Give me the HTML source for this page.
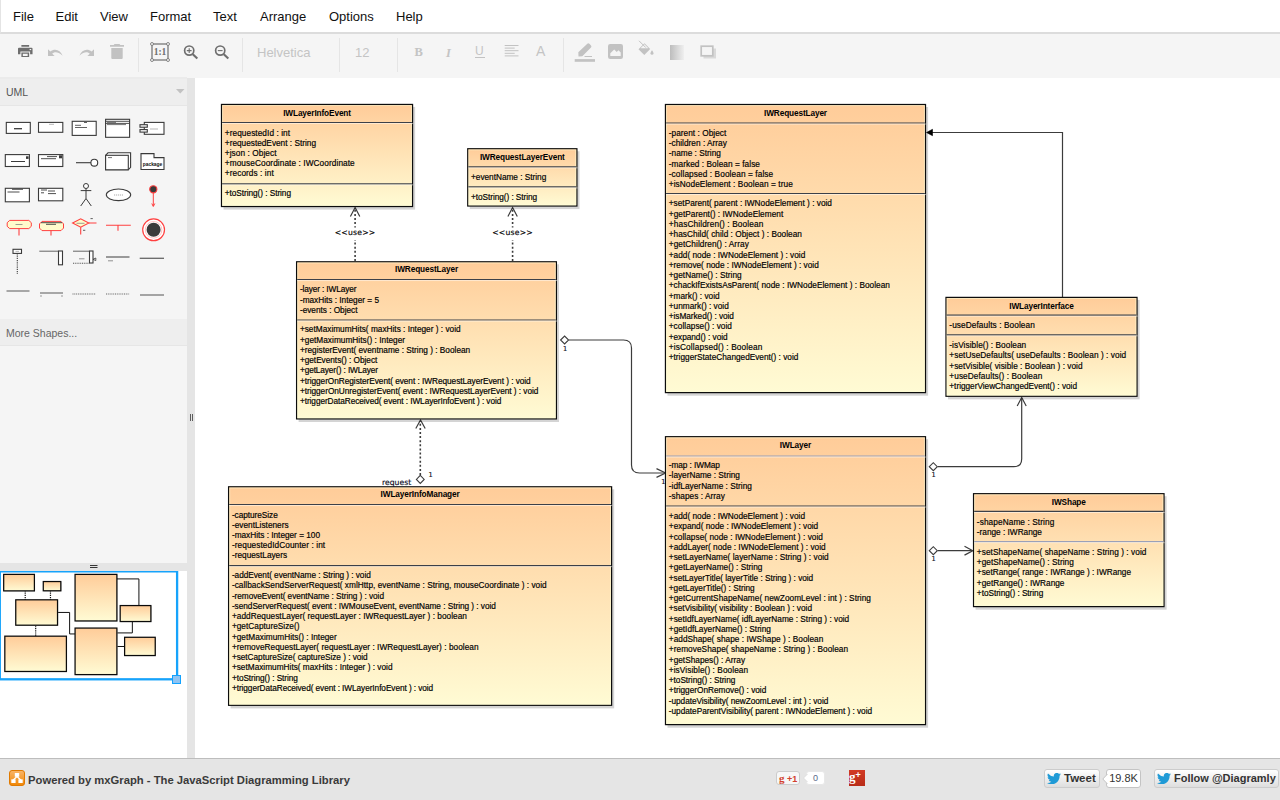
<!DOCTYPE html>
<html><head><meta charset="utf-8"><title>Diagramly</title>
<style>

html,body{margin:0;padding:0}
body{width:1280px;height:800px;overflow:hidden;position:relative;background:#fff;font-family:"Liberation Sans",sans-serif;color:#000}
#menubar{position:absolute;left:0;top:0;width:1279px;height:32px;background:#fff;border-left:1px solid #e4e4e4;border-bottom:2px solid #dcdcdc}
#menubar a{position:absolute;top:9px;font-size:13px;line-height:16px;color:#111;white-space:nowrap}
#toolbar{position:absolute;left:0;top:34px;width:1280px;height:44px;background:#f5f5f5}
#toolbar .sep{position:absolute;top:3px;width:1px;height:34px;background:#e5e5e5}
#toolbar svg{position:absolute;overflow:visible}
#toolbar .tx{position:absolute;color:#c4c4c4;white-space:nowrap}
#sidebar{position:absolute;left:0;top:77px;width:187px;height:486px;background:#f5f5f5;border-top:2px solid #ebebeb;box-sizing:border-box}
#sidebar .hd{position:absolute;left:0;width:187px;height:27px;background:#eeeeee;border-bottom:1px solid #e6e6e6;box-sizing:border-box;font-size:10.5px;color:#555;line-height:26px;padding-left:6px}
#sidebar svg.it{position:absolute;overflow:visible}
#hsplit{position:absolute;left:0;top:563px;width:187px;height:8px;background:#e5e5e5}
#outbg{position:absolute;left:0;top:571px;width:187px;height:187px;background:#fff}
#vsplit{position:absolute;left:187px;top:78px;width:8px;height:680px;background:#e5e5e5}
#footer{position:absolute;left:0;top:758px;width:1280px;height:42px;background:#e5e5e5;border-top:1px solid #bdbdbd;box-sizing:border-box}
#footer .pw{position:absolute;left:28px;top:13.500px;font-weight:bold;font-size:11.250px;line-height:14px;color:#3a3a3a;white-space:nowrap}
#footer .btn{position:absolute;box-sizing:border-box;border:1px solid #ccc;border-radius:3px;background:linear-gradient(#fff,#dedede);font-weight:bold;font-size:11px;color:#333;white-space:nowrap}
#footer .cnt{position:absolute;box-sizing:border-box;border:1px solid #c4c4c4;border-radius:3px;background:#fff;font-size:11px;color:#333;text-align:center}
#diagram text{font-family:"Liberation Sans",sans-serif;fill:#000}
#diagram .ct{font-weight:bold;font-size:8.25px;letter-spacing:-.12px}
#diagram .cl{font-size:8.25px;stroke:#000;stroke-width:.18px}
#diagram .use{font-family:'DejaVu Sans','Liberation Sans',sans-serif;font-size:7.700px;letter-spacing:.2px;stroke:#000;stroke-width:.15px}
#diagram .el{font-family:'DejaVu Sans','Liberation Sans',sans-serif;font-size:7.700px;fill:#0a0a20;stroke:#0a0a20;stroke-width:.15px}
#diagram .e1{font-family:'DejaVu Sans','Liberation Sans',sans-serif;font-size:6.600px;fill:#0a0a20;stroke:#0a0a20;stroke-width:.15px}

</style></head>
<body>
<div id="menubar">
<a style="left:12px">File</a><a style="left:54.5px">Edit</a><a style="left:99px">View</a><a style="left:149px">Format</a><a style="left:212px">Text</a><a style="left:259px">Arrange</a><a style="left:328px">Options</a><a style="left:395px">Help</a>
</div>
<div id="toolbar"><div style="position:absolute;left:0;top:1px">
<svg style="left:18px;top:10px" width="15.500" height="13" viewBox="0 0 16 14" preserveAspectRatio="none"><path fill="#6e6e6e" d="M3.5 0h8v2h-8zM1 3h13a1 1 0 0 1 1 1v6h-2.5v-3h-10v3H0V4a1 1 0 0 1 1-1zM3.5 8h8v5h-8zM5 9.3v2.6h5V9.3z"/><rect x="12" y="4.3" width="1.6" height="1.2" fill="#f5f5f5"/></svg>
<svg style="left:48px;top:13px" width="16" height="9" viewBox="0 0 16 9"><path fill="#c2c2c2" d="M0 1.2L0 8h6.6L4.3 5.7C6 4 9.5 3 14.6 7.8 12.4 1.6 6.5.2 2.3 3.6z"/></svg>
<svg style="left:78px;top:13px" width="16" height="9" viewBox="0 0 16 9"><path fill="#c2c2c2" d="M16 1.2L16 8H9.4l2.3-2.3C10 4 6.500 3 1.400 7.8 3.600 1.600 9.500.2 13.700 3.600z"/></svg>
<svg style="left:110px;top:9px" width="14" height="15" viewBox="0 0 14 15"><path fill="#c2c2c2" d="M4.500 0h5l.8 1H14v1.700H0V1h3.700zM1.300 4h11.400v10a1 1 0 0 1-1 1H2.300a1 1 0 0 1-1-1z"/></svg>
<div class="sep" style="left:138px"></div>
<svg style="left:150px;top:6.5px" width="20" height="20" viewBox="0 0 20 20"><rect x="2" y="2" width="16" height="16" fill="none" stroke="#6e6e6e" stroke-width="1.200"/><g fill="#f5f5f5" stroke="#6e6e6e" stroke-width=".800"><circle cx="2" cy="2" r="1.500"/><circle cx="18" cy="2" r="1.500"/><circle cx="2" cy="18" r="1.500"/><circle cx="18" cy="18" r="1.500"/></g><text x="10" y="13.300" text-anchor="middle" font-family="Liberation Serif,serif" font-weight="bold" font-size="9.500" fill="#6e6e6e">1:1</text></svg>
<svg style="left:183px;top:9px" width="16" height="16" viewBox="0 0 16 16"><circle cx="6.200" cy="6.600" r="4.600" fill="none" stroke="#6e6e6e" stroke-width="1.700"/><path d="M9.800 10.200L14.300 14.500" stroke="#6e6e6e" stroke-width="2.100" fill="none"/><path d="M3.800 6.600h4.800M6.200 4.200v4.800" stroke="#6e6e6e" stroke-width="1.100" fill="none"/></svg>
<svg style="left:213.600px;top:9px" width="16" height="16" viewBox="0 0 16 16"><circle cx="6.200" cy="6.600" r="4.600" fill="none" stroke="#6e6e6e" stroke-width="1.700"/><path d="M9.800 10.200L14.300 14.500" stroke="#6e6e6e" stroke-width="2.100" fill="none"/><path d="M3.800 6.600h4.800" stroke="#6e6e6e" stroke-width="1.100" fill="none"/></svg>
<div class="sep" style="left:242px"></div>
<div class="tx" style="left:257px;top:10px;font-size:13px;line-height:16px">Helvetica</div>
<div class="sep" style="left:339px"></div>
<div class="tx" style="left:355px;top:10px;font-size:13px;line-height:16px">12</div>
<div class="sep" style="left:397px"></div>
<div class="tx" style="left:414.500px;top:9px;font:bold 12.500px/16px 'Liberation Serif',serif">B</div>
<div class="tx" style="left:446px;top:9.500px;font:italic bold 12.500px/16px 'Liberation Serif',serif">I</div>
<div class="tx" style="left:475px;top:8px;font:12px/16px 'Liberation Sans',sans-serif">U</div>
<div style="position:absolute;left:475px;top:22px;width:10px;height:1px;background:#c2c2c2"></div>
<svg style="left:503.500px;top:10px" width="16" height="14" viewBox="0 0 16 14"><path d="M.7 .5h13.800M.7 3.100h10M.7 5.700h13.800M.7 8.300h10M.7 10.900h13.800" stroke="#c2c2c2" stroke-width="1" fill="none"/></svg>
<div class="tx" style="left:536px;top:7px;font:14px/18px 'Liberation Sans',sans-serif">A</div>
<div class="sep" style="left:563px"></div>
<svg style="left:574px;top:8px" width="22" height="20" viewBox="0 0 22 20"><rect x=".7" y="16.100" width="20.300" height="2.700" fill="#c2c2c2"/><path d="M4.500 13.500L4.300 9.300 13.300 .8a1.500 1.500 0 0 1 2.100 0l1.600 1.700a1.500 1.500 0 0 1 0 2L8.300 13.300z" fill="#c2c2c2"/><path d="M10.500 13.500H18" stroke="#c2c2c2" stroke-width="1" fill="none"/></svg>
<svg style="left:608px;top:9px" width="15" height="15" viewBox="0 0 15 15"><rect x="0" y="0" width="15" height="15" rx="2.200" fill="#c2c2c2"/><path d="M2.300 12V9.300L6.200 5.500 8.700 8 10.500 6.300 12.700 8.500V12z" fill="#f5f5f5"/></svg>
<svg style="left:637px;top:5px" width="18" height="18" viewBox="0 0 18 18"><path d="M1.500 9.300L7.500 3.200 13.200 9 7.300 15z" fill="#c2c2c2"/><path d="M3.500 8.300L7.500 4.300 11.300 8.300z" fill="#f5f5f5"/><path d="M2 .8L8.800 7.600" stroke="#c2c2c2" stroke-width="1" fill="none"/><path d="M15 10.300c1.200 1.700 1.500 2.300 1.500 3a1.500 1.500 0 0 1-3 0c0-.7.300-1.300 1.500-3z" fill="#c2c2c2"/></svg>
<svg style="left:670px;top:10px" width="14" height="15" viewBox="0 0 14 15"><defs><linearGradient id="tg" x1="0" y1="0" x2="1" y2="0"><stop offset="0" stop-color="#bdbdbd"/><stop offset="1" stop-color="#efefef"/></linearGradient></defs><rect width="14" height="15" fill="url(#tg)"/></svg>
<svg style="left:700px;top:10px" width="17" height="15" viewBox="0 0 17 15"><rect x="3.500" y="3.500" width="12.500" height="10" fill="#d9d9d9"/><rect x="1.200" y="1.200" width="11.600" height="9.600" fill="#f5f5f5" stroke="#c2c2c2" stroke-width="1.700"/></svg>
</div></div>
<div id="sidebar">
<div class="hd" style="top:0">UML</div>
<svg class="it" style="left:176px;top:10px" width="9" height="5" viewBox="0 0 9 5"><path d="M0 0H8.500L4.250 4.500z" fill="#c2c2c2"/></svg>
<svg class="it" style="left:0;top:-2px" width="187" height="240" viewBox="0 77 187 240" fill="none" stroke-width="1.100">
<rect x="6.3" y="122.4" width="24.0" height="11.0" fill="#fff" stroke="#3a3a3a" stroke-width="1.1" rx="0"/>
<path d="M14 128.700h8" stroke="#3a3a3a" stroke-width="1.3" />
<rect x="38.5" y="122.4" width="24.3" height="9.9" fill="#fff" stroke="#3a3a3a" stroke-width="1.1" rx="0"/>
<path d="M49 124.300h5" stroke="#888" stroke-width="0.6" />
<rect x="72.2" y="121.3" width="24.0" height="14.1" fill="#fff" stroke="#3a3a3a" stroke-width="1.1" rx="0"/>
<path d="M75 125.300h6M75 127.500h12M84 122.500h3" stroke="#3a3a3a" stroke-width="0.8" />
<rect x="105.6" y="119.3" width="24.0" height="18.0" fill="#fff" stroke="#3a3a3a" stroke-width="1.1" rx="0"/>
<path d="M105.600 121.300h24M105.600 123.400h24" stroke="#3a3a3a" stroke-width="0.9" />
<path d="M107 122.400h9M107 124.600h19" stroke="#3a3a3a" stroke-width="0.7" />
<rect x="144.3" y="122.4" width="19.7" height="11.9" fill="#fff" stroke="#3a3a3a" stroke-width="1.1" rx="0"/>
<rect x="140" y="124.7" width="7.3" height="2.5" fill="#fff" stroke="#3a3a3a" stroke-width="1.1" rx="0"/>
<rect x="140" y="129.6" width="7.3" height="2.5" fill="#fff" stroke="#3a3a3a" stroke-width="1.1" rx="0"/>
<path d="M150 129h8" stroke="#888" stroke-width="0.6" />
<rect x="5.3" y="154.6" width="24.1" height="11.9" fill="#fff" stroke="#3a3a3a" stroke-width="1.1" rx="0"/>
<path d="M11 161.500h14" stroke="#3a3a3a" stroke-width="1" />
<rect x="26" y="156.300" width="2.600" height="2.600" fill="#3a3a3a"/>
<rect x="38.5" y="154.6" width="24.3" height="11.9" fill="#fff" stroke="#3a3a3a" stroke-width="1.1" rx="0"/>
<path d="M47 156.600h10M41 158.700h15" stroke="#3a3a3a" stroke-width="0.9" />
<rect x="59" y="155.300" width="3" height="3" fill="#3a3a3a"/>
<path d="M76 162.700h15" stroke="#3a3a3a" stroke-width="1.1" />
<circle cx="94.300" cy="162.700" r="3.400" fill="#fff" stroke="#3a3a3a" stroke-width="1.100"/>
<path d="M105.600 155.300L108 152.800H130.600V167.300L128.300 169.800H105.600z" fill="#fff" stroke="#3a3a3a" stroke-width="1.100"/>
<rect x="105.6" y="155.3" width="22.7" height="14.5" fill="#fff" stroke="#3a3a3a" stroke-width="1.1" rx="0"/>
<path d="M108 157.600h4" stroke="#3a3a3a" stroke-width="0.7" />
<path d="M141 153.600H154V157.600H164V169.500H141z" fill="#fff" stroke="#3a3a3a" stroke-width="1.100"/>
<text x="152.500" y="166.300" text-anchor="middle" font-family="Liberation Sans,sans-serif" font-weight="bold" font-size="4.900" fill="#111" stroke="none">package</text>
<rect x="5.3" y="188.3" width="24.1" height="13.5" fill="#fff" stroke="#3a3a3a" stroke-width="1.1" rx="0"/>
<path d="M12 189.300h11M7.500 192h12" stroke="#3a3a3a" stroke-width="0.9" />
<rect x="38.5" y="188.3" width="24.3" height="12.5" fill="#fff" stroke="#3a3a3a" stroke-width="1.1" rx="0"/>
<path d="M41 190h6M48 191h7M41 192.800h3M48 193.600h8" stroke="#3a3a3a" stroke-width="0.9" />
<circle cx="86" cy="186" r="2.500" fill="#fff" stroke="#3a3a3a" stroke-width="1"/>
<path d="M86 188.500V198.500M80.700 190.600H91.300M86 198.500L80.700 206M86 198.500L91.300 206" stroke="#3a3a3a" stroke-width="1" />
<ellipse cx="118.500" cy="194.800" rx="12.200" ry="5.800" fill="#fff" stroke="#3a3a3a" stroke-width="1.100"/>
<path d="M114 195h9" stroke="#888" stroke-width="0.7" stroke-dasharray="1.200 .8"/>
<circle cx="153.300" cy="189.300" r="3.600" fill="#3a3a3a" stroke="#ff4040" stroke-width="1.100"/>
<path d="M153.300 193V206M151.800 203.500L153.300 206.500L154.800 203.500" stroke="#ff4040" stroke-width="1" />
<path d="M9.700 220.400H28.800L31.300 222.700V226.300L28.800 228.600H9.700L7.200 226.300V222.700z" fill="#fffbcc" stroke="#ff4040" stroke-width="1"/>
<path d="M19 228.600V235.500" stroke="#ff4040" stroke-width="1.1" />
<path d="M15.500 224.500h7" stroke="#777" stroke-width="0.7" />
<path d="M42 221.400H61L63.500 223.900V228.100L61 230.600H42L39.500 228.100V223.900z" fill="#fffbcc" stroke="#ff4040" stroke-width="1"/>
<path d="M51 230.600V235.500" stroke="#ff4040" stroke-width="1.1" />
<path d="M41 222.700h21M46 224.300h10" stroke="#3a3a3a" stroke-width="0.9" />
<path d="M72.600 223L80.700 218.800 88.800 223 80.700 227.200z" fill="#fffbcc" stroke="#ff4040" stroke-width="1.100"/>
<path d="M88.800 223H96.500M80.700 227.200V234.500" stroke="#ff4040" stroke-width="1.1" />
<path d="M76.500 223.300h8" stroke="#777" stroke-width="0.7" />
<path d="M90.500 218.600h2.300M83 230.300h2.300" stroke="#3a3a3a" stroke-width="0.8" />
<path d="M106 225.300H130.800M118 225.300V230.800" stroke="#ff4040" stroke-width="1.1" />
<circle cx="153.600" cy="229.800" r="10.900" fill="#fff" stroke="#ff4040" stroke-width="1.200"/><circle cx="153.600" cy="229.800" r="8.300" fill="none" stroke="#ffb4b4" stroke-width=".800"/><circle cx="153.600" cy="229.800" r="7" fill="#3a3a3a" stroke="none"/>
<rect x="13" y="249.3" width="8.5" height="4.1" fill="#fff" stroke="#3a3a3a" stroke-width="1.1" rx="0"/>
<path d="M17.300 253.400V274" stroke="#3a3a3a" stroke-width="1.1" stroke-dasharray="1.200 1"/>
<path d="M15.500 251.400h3.500" stroke="#888" stroke-width="0.6" />
<path d="M39.300 251.200H58.500" stroke="#555" stroke-width="0.9" />
<rect x="58.5" y="251" width="4.0" height="13.8" fill="#fff" stroke="#3a3a3a" stroke-width="1.1" rx="0"/>
<path d="M73 251.200H89.500" stroke="#555" stroke-width="0.9" />
<rect x="89.5" y="251" width="3.5" height="12" fill="#fff" stroke="#3a3a3a" stroke-width="1.1" rx="0"/>
<path d="M73 263.300H89.500" stroke="#555" stroke-width="1.1" stroke-dasharray="1 .8"/>
<path d="M79 258.800h5.500" stroke="#777" stroke-width="0.8" />
<path d="M93 259.300l2.800-1.300v2.600z" stroke="#3a3a3a" stroke-width="0.8" />
<path d="M106 257H129.500" stroke="#666" stroke-width="1.3" />
<path d="M108 260.800h5" stroke="#777" stroke-width="0.8" />
<path d="M139.700 258.300H164" stroke="#666" stroke-width="1.3" />
<path d="M6.500 291H29.500" stroke="#666" stroke-width="1.1" />
<path d="M40 293H63" stroke="#666" stroke-width="1.1" />
<path d="M40 296h2M61 296h2" stroke="#777" stroke-width="0.7" />
<path d="M72.500 294H96" stroke="#666" stroke-width="1.1" stroke-dasharray="1 .8"/>
<path d="M106 294H129.500" stroke="#666" stroke-width="1.1" stroke-dasharray="1 .8"/>
<path d="M140 295H164" stroke="#777" stroke-width="1.3" />
</svg>
<div class="hd" style="top:240px;color:#666;line-height:28px">More Shapes...</div>
</div>
<div id="hsplit"><svg style="position:absolute;left:90px;top:1px" width="8" height="5" viewBox="0 0 8 5"><path d="M0 1.500h7.500M0 3.500h7.500" stroke="#222" stroke-width=".9"/></svg></div>
<div id="outbg"></div>
<svg style="position:absolute;left:189px;top:414px;z-index:3" width="5" height="8" viewBox="0 0 5 8"><path d="M1.500 0v7M3.500 0v7" stroke="#222" stroke-width=".700"/></svg>
<svg id="outline" width="187" height="187" viewBox="0 571 187 187" style="position:absolute;left:0;top:571px">
<g fill="none" stroke="#111" stroke-width="1">
<path d="M25.22 599.68V590.95" stroke-dasharray="1 .8" stroke-width="1.2"/>
<path d="M50.47 599.68V590.95" stroke-dasharray="1 .8" stroke-width="1.2"/>
<path d="M35.68 636.2V625.37" stroke-dasharray="1 .8" stroke-width="1.2"/>
<path d="M58.11 612.44H69.61V633.94H75.15"/>
<path d="M117.44 632.92H132.35V621.66"/>
<path d="M117.44 646.49H124.52"/>
<path d="M138.91 605.5V578.91H116.96"/>
</g>
<rect x="4.28" y="574.98" width="30.72" height="16.49" fill="#000" opacity=".25"/>
<rect x="3.68" y="574.38" width="30.72" height="16.49" fill="url(#g)" stroke="#0a0a0a" stroke-width="1.250"/>
<rect x="43.870000000000005" y="582.14" width="17.56" height="9.25" fill="#000" opacity=".25"/>
<rect x="43.27" y="581.54" width="17.56" height="9.25" fill="url(#g)" stroke="#0a0a0a" stroke-width="1.250"/>
<rect x="16.35" y="600.41" width="41.78" height="25.38" fill="#000" opacity=".25"/>
<rect x="15.75" y="599.81" width="41.78" height="25.38" fill="url(#g)" stroke="#0a0a0a" stroke-width="1.250"/>
<rect x="5.42" y="636.77" width="61.59" height="35.31" fill="#000" opacity=".25"/>
<rect x="4.82" y="636.17" width="61.59" height="35.31" fill="url(#g)" stroke="#0a0a0a" stroke-width="1.250"/>
<rect x="75.66" y="574.99" width="41.82" height="46.55" fill="#000" opacity=".25"/>
<rect x="75.06" y="574.39" width="41.82" height="46.55" fill="url(#g)" stroke="#0a0a0a" stroke-width="1.250"/>
<rect x="75.66999999999999" y="628.6700000000001" width="41.81" height="46.53" fill="#000" opacity=".25"/>
<rect x="75.07" y="628.07" width="41.81" height="46.53" fill="url(#g)" stroke="#0a0a0a" stroke-width="1.250"/>
<rect x="120.78" y="606.16" width="30.71" height="15.97" fill="#000" opacity=".25"/>
<rect x="120.18" y="605.56" width="30.71" height="15.97" fill="url(#g)" stroke="#0a0a0a" stroke-width="1.250"/>
<rect x="125.21" y="637.88" width="30.62" height="18.25" fill="#000" opacity=".25"/>
<rect x="124.61" y="637.28" width="30.62" height="18.25" fill="url(#g)" stroke="#0a0a0a" stroke-width="1.250"/>
<rect x="-.200" y="571.350" width="177.300" height="107.950" fill="none" stroke="#16a3fb" stroke-width="2.300"/>
<rect x="172.5" y="675.5" width="8" height="8" fill="#8fc4f3" stroke="#12a2ff" stroke-width="1"/>
</svg>
<div id="vsplit"></div>
<svg id="diagram" width="1085" height="681" viewBox="195 77 1085 681" style="position:absolute;left:195px;top:77px">
<defs><linearGradient id="g" x1="0" y1="0" x2="0" y2="1"><stop offset="0" stop-color="#ffcc99"/><stop offset="1" stop-color="#fffbd4"/></linearGradient></defs>
<g fill="none" stroke="#3c3c3c" stroke-width="1.2">
<path d="M355.1 261V208.500" stroke-dasharray="2 2.100" stroke-width="1.600"/>
<path d="M350.40000000000003 216.5L355.1 207.5L359.8 216.5"/>
<path d="M512.6 261V208.500" stroke-dasharray="2 2.100" stroke-width="1.600"/>
<path d="M507.90000000000003 216.5L512.6 207.5L517.3000000000001 216.5"/>
<path d="M420.300 475V421" stroke-dasharray="2 2.100" stroke-width="1.600"/>
<path d="M415.8 428.5L420.5 420L425.2 428.5"/>
<path d="M420.300 475.300L424.200 479.400L420.300 483.500L416.400 479.400Z" fill="#fff" stroke-width="1.100"/>
<path d="M569 340H623.5Q631.5 340 631.5 348V465Q631.5 473 639.5 473H665"/>
<path d="M560.600 340L564.600 336L568.600 340L564.600 344Z" fill="#fff" stroke-width="1.100"/>
<path d="M656.5 468.6L665.6 473L656.5 477.4"/>
<path d="M937.6 466.7H1013.7Q1021.7 466.7 1021.7 458.7V398"/>
<path d="M929.300 466.700L933.300 462.700L937.300 466.700L933.300 470.700Z" fill="#fff" stroke-width="1.100"/>
<path d="M1017.2 406L1021.7 397.5L1026.2 406"/>
<path d="M937.6 550.7H972"/>
<path d="M929.300 550.700L933.300 546.700L937.300 550.700L933.300 554.700Z" fill="#fff" stroke-width="1.100"/>
<path d="M964.5 546.3L972.8 550.7L964.5 555.1"/>
<path d="M1062.5 297V132.5H931"/>
<path d="M926.5 132.5L932.5 129.3V135.7Z" fill="#000" stroke="#000" stroke-width=".6"/>
</g>
<rect x="223.5" y="106.95" width="191.65" height="102.64999999999999" fill="#000" opacity=".17"/>
<rect x="221.5" y="104.45" width="191.05" height="102.05" fill="url(#g)" stroke="#0c0c0c" stroke-width="1.25"/>
<rect x="222.6" y="105.55" width="188.85" height="99.85" fill="none" stroke="#ffffd8" stroke-opacity=".55" stroke-width="1"/>
<path d="M222.1 122.5H411.95" stroke="#3c4048" stroke-width="1.2"/>
<path d="M222.1 123.55H413.25" stroke="#fff" stroke-opacity=".5" stroke-width="1"/>
<path d="M222.1 183.8H411.95" stroke="#3c4048" stroke-width="1.2"/>
<path d="M222.1 184.85H413.25" stroke="#fff" stroke-opacity=".5" stroke-width="1"/>
<text class="ct" x="317.025" y="115.9" text-anchor="middle">IWLayerInfoEvent</text>
<text class="cl" x="224.8" y="135.85" textLength="65.2" lengthAdjust="spacing">+requestedId : int</text>
<text class="cl" x="224.8" y="145.93" textLength="91.2" lengthAdjust="spacing">+requestedEvent : String</text>
<text class="cl" x="224.8" y="156.01" textLength="51.7" lengthAdjust="spacing">+json : Object</text>
<text class="cl" x="224.8" y="166.09" textLength="129.9" lengthAdjust="spacing">+mouseCoordinate : IWCoordinate</text>
<text class="cl" x="224.8" y="176.17" textLength="48.9" lengthAdjust="spacing">+records : int</text>
<text class="cl" x="224.8" y="195.85" textLength="66.2" lengthAdjust="spacing">+toString() : String</text>
<rect x="469.75" y="151.25" width="109.75" height="57.85" fill="#000" opacity=".17"/>
<rect x="467.75" y="148.75" width="109.15" height="57.25" fill="url(#g)" stroke="#0c0c0c" stroke-width="1.25"/>
<rect x="468.85" y="149.85" width="106.95" height="55.05" fill="none" stroke="#ffffd8" stroke-opacity=".55" stroke-width="1"/>
<path d="M468.35 166.8H576.3" stroke="#3c4048" stroke-width="1.2"/>
<path d="M468.35 167.85H577.6" stroke="#fff" stroke-opacity=".5" stroke-width="1"/>
<path d="M468.35 186.9H576.3" stroke="#3c4048" stroke-width="1.2"/>
<path d="M468.35 187.95H577.6" stroke="#fff" stroke-opacity=".5" stroke-width="1"/>
<text class="ct" x="522.325" y="159.75" text-anchor="middle">IWRequestLayerEvent</text>
<text class="cl" x="471.05" y="180.0" textLength="75.2" lengthAdjust="spacing">+eventName : String</text>
<text class="cl" x="471.05" y="199.6" textLength="66.1" lengthAdjust="spacing">+toString() : String</text>
<rect x="298.6" y="264.3" width="260.40000000000003" height="157.7" fill="#000" opacity=".17"/>
<rect x="296.6" y="261.8" width="259.8" height="157.1" fill="url(#g)" stroke="#0c0c0c" stroke-width="1.25"/>
<rect x="297.7" y="262.9" width="257.6" height="154.9" fill="none" stroke="#ffffd8" stroke-opacity=".55" stroke-width="1"/>
<path d="M297.2 279.5H555.8" stroke="#3c4048" stroke-width="1.2"/>
<path d="M297.2 280.55H557.1" stroke="#fff" stroke-opacity=".5" stroke-width="1"/>
<path d="M297.2 320.0H555.8" stroke="#3c4048" stroke-width="1.2"/>
<path d="M297.2 321.05H557.1" stroke="#fff" stroke-opacity=".5" stroke-width="1"/>
<text class="ct" x="426.5" y="271.9" text-anchor="middle">IWRequestLayer</text>
<text class="cl" x="299.9" y="292.4" textLength="56.5" lengthAdjust="spacing">-layer : IWLayer</text>
<text class="cl" x="299.9" y="302.65" textLength="79.1" lengthAdjust="spacing">-maxHits : Integer = 5</text>
<text class="cl" x="299.9" y="312.9" textLength="57.6" lengthAdjust="spacing">-events : Object</text>
<text class="cl" x="299.9" y="332.4" textLength="160.7" lengthAdjust="spacing">+setMaximumHits( maxHits : Integer ) : void</text>
<text class="cl" x="299.9" y="342.65" textLength="105.2" lengthAdjust="spacing">+getMaximumHits() : Integer</text>
<text class="cl" x="299.9" y="352.9" textLength="170.3" lengthAdjust="spacing">+registerEvent( eventname : String ) : Boolean</text>
<text class="cl" x="299.9" y="363.15" textLength="77.4" lengthAdjust="spacing">+getEvents() : Object</text>
<text class="cl" x="299.9" y="373.4" textLength="78.2" lengthAdjust="spacing">+getLayer() : IWLayer</text>
<text class="cl" x="299.9" y="383.65" textLength="230.8" lengthAdjust="spacing">+triggerOnRegisterEvent( event : IWRequestLayerEvent ) : void</text>
<text class="cl" x="299.9" y="393.9" textLength="238.5" lengthAdjust="spacing">+triggerOnUnregisterEvent( event : IWRequestLayerEvent ) : void</text>
<text class="cl" x="299.9" y="404.15" textLength="201.4" lengthAdjust="spacing">+triggerDataReceived( event : IWLayerInfoEvent ) : void</text>
<rect x="230.6" y="489.3" width="383.6" height="219.1" fill="#000" opacity=".17"/>
<rect x="228.6" y="486.8" width="383.0" height="218.5" fill="url(#g)" stroke="#0c0c0c" stroke-width="1.25"/>
<rect x="229.7" y="487.9" width="380.8" height="216.3" fill="none" stroke="#ffffd8" stroke-opacity=".55" stroke-width="1"/>
<path d="M229.2 504.5H611.0" stroke="#3c4048" stroke-width="1.2"/>
<path d="M229.2 505.55H612.3" stroke="#fff" stroke-opacity=".5" stroke-width="1"/>
<path d="M229.2 565.6H611.0" stroke="#3c4048" stroke-width="1.2"/>
<path d="M229.2 566.65H612.3" stroke="#fff" stroke-opacity=".5" stroke-width="1"/>
<text class="ct" x="420.1" y="497.0" text-anchor="middle">IWLayerInfoManager</text>
<text class="cl" x="231.9" y="518.1" textLength="45.9" lengthAdjust="spacing">-captureSize</text>
<text class="cl" x="231.9" y="528.18" textLength="56.7" lengthAdjust="spacing">-eventListeners</text>
<text class="cl" x="231.9" y="538.26" textLength="88.1" lengthAdjust="spacing">-maxHits : Integer = 100</text>
<text class="cl" x="231.9" y="548.34" textLength="93.2" lengthAdjust="spacing">-requestedIdCounter : int</text>
<text class="cl" x="231.9" y="558.42" textLength="55.2" lengthAdjust="spacing">-requestLayers</text>
<text class="cl" x="231.9" y="578.1" textLength="138.9" lengthAdjust="spacing">-addEvent( eventName : String ) : void</text>
<text class="cl" x="231.9" y="588.35" textLength="314.8" lengthAdjust="spacing">-callbackSendServerRequest( xmlHttp, eventName : String, mouseCoordinate ) : void</text>
<text class="cl" x="231.9" y="598.6" textLength="152.1" lengthAdjust="spacing">-removeEvent( eventName : String ) : void</text>
<text class="cl" x="231.9" y="608.85" textLength="264.0" lengthAdjust="spacing">-sendServerRequest( event : IWMouseEvent, eventName : String ) : void</text>
<text class="cl" x="231.9" y="619.1" textLength="235.0" lengthAdjust="spacing">+addRequestLayer( requestLayer : IWRequestLayer ) : boolean</text>
<text class="cl" x="231.9" y="629.35" textLength="67.6" lengthAdjust="spacing">+getCaptureSize()</text>
<text class="cl" x="231.9" y="639.6" textLength="104.8" lengthAdjust="spacing">+getMaximumHits() : Integer</text>
<text class="cl" x="231.9" y="649.85" textLength="246.6" lengthAdjust="spacing">+removeRequestLayer( requestLayer : IWRequestLayer) : boolean</text>
<text class="cl" x="231.9" y="660.1" textLength="135.8" lengthAdjust="spacing">+setCaptureSize( captureSize ) : void</text>
<text class="cl" x="231.9" y="670.35" textLength="160.6" lengthAdjust="spacing">+setMaximumHits( maxHits : Integer ) : void</text>
<text class="cl" x="231.9" y="680.6" textLength="66.0" lengthAdjust="spacing">+toString() : String</text>
<text class="cl" x="231.9" y="690.85" textLength="201.3" lengthAdjust="spacing">+triggerDataReceived( event : IWLayerInfoEvent ) : void</text>
<rect x="667.45" y="107.0" width="260.65000000000003" height="288.70000000000005" fill="#000" opacity=".17"/>
<rect x="665.45" y="104.5" width="260.05" height="288.1" fill="url(#g)" stroke="#0c0c0c" stroke-width="1.25"/>
<rect x="666.55" y="105.6" width="257.85" height="285.9" fill="none" stroke="#ffffd8" stroke-opacity=".55" stroke-width="1"/>
<path d="M666.05 123.0H924.9" stroke="#3c4048" stroke-width="1.2"/>
<path d="M666.05 124.05H926.2" stroke="#fff" stroke-opacity=".5" stroke-width="1"/>
<path d="M666.05 193.5H924.9" stroke="#3c4048" stroke-width="1.2"/>
<path d="M666.05 194.55H926.2" stroke="#fff" stroke-opacity=".5" stroke-width="1"/>
<text class="ct" x="795.475" y="115.9" text-anchor="middle">IWRequestLayer</text>
<text class="cl" x="668.75" y="135.85" textLength="57.5" lengthAdjust="spacing">-parent : Object</text>
<text class="cl" x="668.75" y="146.1" textLength="58.1" lengthAdjust="spacing">-children : Array</text>
<text class="cl" x="668.75" y="156.35" textLength="52.2" lengthAdjust="spacing">-name : String</text>
<text class="cl" x="668.75" y="166.6" textLength="91.2" lengthAdjust="spacing">-marked : Bolean = false</text>
<text class="cl" x="668.75" y="176.85" textLength="104.4" lengthAdjust="spacing">-collapsed : Boolean = false</text>
<text class="cl" x="668.75" y="187.1" textLength="124.0" lengthAdjust="spacing">+isNodeElement : Boolean = true</text>
<text class="cl" x="668.75" y="206.4" textLength="163.2" lengthAdjust="spacing">+setParent( parent : IWNodeElement ) : void</text>
<text class="cl" x="668.75" y="216.65" textLength="114.5" lengthAdjust="spacing">+getParent() : IWNodeElement</text>
<text class="cl" x="668.75" y="226.9" textLength="94.5" lengthAdjust="spacing">+hasChildren() : Boolean</text>
<text class="cl" x="668.75" y="237.15" textLength="133.2" lengthAdjust="spacing">+hasChild( child : Object ) : Boolean</text>
<text class="cl" x="668.75" y="247.4" textLength="80.0" lengthAdjust="spacing">+getChildren() : Array</text>
<text class="cl" x="668.75" y="257.65" textLength="136.5" lengthAdjust="spacing">+add( node : IWNodeElement ) : void</text>
<text class="cl" x="668.75" y="267.9" textLength="150.0" lengthAdjust="spacing">+remove( node : IWNodeElement ) : void</text>
<text class="cl" x="668.75" y="278.15" textLength="72.9" lengthAdjust="spacing">+getName() : String</text>
<text class="cl" x="668.75" y="288.4" textLength="221.2" lengthAdjust="spacing">+chackIfExistsAsParent( node : IWNodeElement ) : Boolean</text>
<text class="cl" x="668.75" y="298.65" textLength="50.9" lengthAdjust="spacing">+mark() : void</text>
<text class="cl" x="668.75" y="308.9" textLength="60.0" lengthAdjust="spacing">+unmark() : void</text>
<text class="cl" x="668.75" y="319.15" textLength="65.2" lengthAdjust="spacing">+isMarked() : void</text>
<text class="cl" x="668.75" y="329.4" textLength="63.2" lengthAdjust="spacing">+collapse() : void</text>
<text class="cl" x="668.75" y="339.65" textLength="58.9" lengthAdjust="spacing">+expand() : void</text>
<text class="cl" x="668.75" y="349.9" textLength="93.6" lengthAdjust="spacing">+isCollapsed() : Boolean</text>
<text class="cl" x="668.75" y="360.15" textLength="129.6" lengthAdjust="spacing">+triggerStateChangedEvent() : void</text>
<rect x="667.5" y="439.2" width="260.6" height="288.5" fill="#000" opacity=".17"/>
<rect x="665.5" y="436.7" width="260.0" height="287.9" fill="url(#g)" stroke="#0c0c0c" stroke-width="1.25"/>
<rect x="666.6" y="437.8" width="257.8" height="285.7" fill="none" stroke="#ffffd8" stroke-opacity=".55" stroke-width="1"/>
<path d="M666.1 456.0H924.9" stroke="#9aa0b8" stroke-width="1.2"/>
<path d="M666.1 457.05H926.2" stroke="#fff" stroke-opacity=".5" stroke-width="1"/>
<path d="M666.1 506.0H924.9" stroke="#3c4048" stroke-width="1.2"/>
<path d="M666.1 507.05H926.2" stroke="#fff" stroke-opacity=".5" stroke-width="1"/>
<text class="ct" x="795.5" y="447.9" text-anchor="middle">IWLayer</text>
<text class="cl" x="668.8" y="468.2" textLength="51.0" lengthAdjust="spacing">-map : IWMap</text>
<text class="cl" x="668.8" y="478.45" textLength="71.1" lengthAdjust="spacing">-layerName : String</text>
<text class="cl" x="668.8" y="488.7" textLength="83.1" lengthAdjust="spacing">-idfLayerName : String</text>
<text class="cl" x="668.8" y="498.95" textLength="56.0" lengthAdjust="spacing">-shapes : Array</text>
<text class="cl" x="668.8" y="519.2" textLength="136.2" lengthAdjust="spacing">+add( node : IWNodeElement ) : void</text>
<text class="cl" x="668.8" y="529.45" textLength="149.4" lengthAdjust="spacing">+expand( node : IWNodeElement ) : void</text>
<text class="cl" x="668.8" y="539.7" textLength="154.1" lengthAdjust="spacing">+collapse( node : IWNodeElement ) : void</text>
<text class="cl" x="668.8" y="549.95" textLength="156.8" lengthAdjust="spacing">+addLayer( node : IWNodeElement ) : void</text>
<text class="cl" x="668.8" y="560.2" textLength="159.9" lengthAdjust="spacing">+setLayerName( layerName : String ) : void</text>
<text class="cl" x="668.8" y="570.45" textLength="93.6" lengthAdjust="spacing">+getLayerName() : String</text>
<text class="cl" x="668.8" y="580.7" textLength="144.4" lengthAdjust="spacing">+setLayerTitle( layerTitle : String ) : void</text>
<text class="cl" x="668.8" y="590.95" textLength="85.9" lengthAdjust="spacing">+getLayerTitle() : String</text>
<text class="cl" x="668.8" y="601.2" textLength="202.1" lengthAdjust="spacing">+getCurrentShapeName( newZoomLevel : int ) : String</text>
<text class="cl" x="668.8" y="611.45" textLength="143.2" lengthAdjust="spacing">+setVisibility( visibility : Boolean ) : void</text>
<text class="cl" x="668.8" y="621.7" textLength="180.4" lengthAdjust="spacing">+setIdfLayerName( idfLayerName : String ) : void</text>
<text class="cl" x="668.8" y="631.95" textLength="102.1" lengthAdjust="spacing">+getIdfLayerName() : String</text>
<text class="cl" x="668.8" y="642.2" textLength="154.5" lengthAdjust="spacing">+addShape( shape : IWShape ) : Boolean</text>
<text class="cl" x="668.8" y="652.45" textLength="179.3" lengthAdjust="spacing">+removeShape( shapeName : String ) : Boolean</text>
<text class="cl" x="668.8" y="662.7" textLength="76.2" lengthAdjust="spacing">+getShapes() : Array</text>
<text class="cl" x="668.8" y="672.95" textLength="79.3" lengthAdjust="spacing">+isVisible() : Boolean</text>
<text class="cl" x="668.8" y="683.2" textLength="66.5" lengthAdjust="spacing">+toString() : String</text>
<text class="cl" x="668.8" y="693.45" textLength="97.5" lengthAdjust="spacing">+triggerOnRemove() : void</text>
<text class="cl" x="668.8" y="703.7" textLength="159.5" lengthAdjust="spacing">-updateVisibility( newZoomLevel : int ) : void</text>
<text class="cl" x="668.8" y="713.95" textLength="203.3" lengthAdjust="spacing">-updateParentVisibility( parent : IWNodeElement ) : void</text>
<rect x="948.0" y="299.9" width="191.6" height="99.44999999999999" fill="#000" opacity=".17"/>
<rect x="946.0" y="297.4" width="191.0" height="98.85" fill="url(#g)" stroke="#0c0c0c" stroke-width="1.25"/>
<rect x="947.1" y="298.5" width="188.8" height="96.65" fill="none" stroke="#ffffd8" stroke-opacity=".55" stroke-width="1"/>
<path d="M946.6 315.1H1136.4" stroke="#3c4048" stroke-width="1.2"/>
<path d="M946.6 316.15H1137.7" stroke="#fff" stroke-opacity=".5" stroke-width="1"/>
<path d="M946.6 334.8H1136.4" stroke="#3c4048" stroke-width="1.2"/>
<path d="M946.6 335.85H1137.7" stroke="#fff" stroke-opacity=".5" stroke-width="1"/>
<text class="ct" x="1041.5" y="308.5" text-anchor="middle">IWLayerInterface</text>
<text class="cl" x="949.3" y="328.1" textLength="85.5" lengthAdjust="spacing">-useDefaults : Boolean</text>
<text class="cl" x="949.3" y="348.1" textLength="76.9" lengthAdjust="spacing">-isVisible() : Boolean</text>
<text class="cl" x="949.3" y="358.35" textLength="176.9" lengthAdjust="spacing">+setUseDefaults( useDefaults : Boolean ) : void</text>
<text class="cl" x="949.3" y="368.6" textLength="133.2" lengthAdjust="spacing">+setVisible( visible : Boolean ) : void</text>
<text class="cl" x="949.3" y="378.85" textLength="93.0" lengthAdjust="spacing">+useDefaults() : Boolean</text>
<text class="cl" x="949.3" y="389.1" textLength="127.7" lengthAdjust="spacing">+triggerViewChangedEvent() : void</text>
<rect x="975.55" y="496.2" width="191.04999999999998" height="113.5" fill="#000" opacity=".17"/>
<rect x="973.55" y="493.7" width="190.45" height="112.9" fill="url(#g)" stroke="#0c0c0c" stroke-width="1.25"/>
<rect x="974.65" y="494.8" width="188.25" height="110.7" fill="none" stroke="#ffffd8" stroke-opacity=".55" stroke-width="1"/>
<path d="M974.15 511.45H1163.4" stroke="#3c4048" stroke-width="1.2"/>
<path d="M974.15 512.5H1164.7" stroke="#fff" stroke-opacity=".5" stroke-width="1"/>
<path d="M974.15 541.65H1163.4" stroke="#9aa0b8" stroke-width="1.2"/>
<path d="M974.15 542.7H1164.7" stroke="#fff" stroke-opacity=".5" stroke-width="1"/>
<text class="ct" x="1068.775" y="505.2" text-anchor="middle">IWShape</text>
<text class="cl" x="976.85" y="525.1" textLength="77.4" lengthAdjust="spacing">-shapeName : String</text>
<text class="cl" x="976.85" y="535.35" textLength="65.1" lengthAdjust="spacing">-range : IWRange</text>
<text class="cl" x="976.85" y="554.8" textLength="169.6" lengthAdjust="spacing">+setShapeName( shapeName : String ) : void</text>
<text class="cl" x="976.85" y="565.05" textLength="96.9" lengthAdjust="spacing">+getShapeName() : String</text>
<text class="cl" x="976.85" y="575.3" textLength="154.2" lengthAdjust="spacing">+setRange( range : IWRange ) : IWRange</text>
<text class="cl" x="976.85" y="585.55" textLength="87.6" lengthAdjust="spacing">+getRange() : IWRange</text>
<text class="cl" x="976.85" y="595.8" textLength="66.4" lengthAdjust="spacing">+toString() : String</text>
<rect x="335.1" y="227.500" width="40" height="12.500" fill="#fff"/>
<text class="use" x="355.1" y="235" text-anchor="middle">&lt;&lt;use&gt;&gt;</text>
<rect x="492.6" y="227.500" width="40" height="12.500" fill="#fff"/>
<text class="use" x="512.6" y="235" text-anchor="middle">&lt;&lt;use&gt;&gt;</text>
<text class="el" x="381.900" y="484.600" textLength="29.400" lengthAdjust="spacing">request</text>
<text class="e1" x="428.6" y="476.7">1</text>
<text class="e1" x="563" y="351.3">1</text>
<text class="e1" x="661.3" y="483.7">1</text>
<text class="e1" x="931.5" y="476.7">1</text>
<text class="e1" x="931.5" y="560.7">1</text>
</svg>
<div id="footer">
<svg style="position:absolute;left:9px;top:11px" width="16" height="16" viewBox="0 0 16 16"><defs><linearGradient id="og" x1="0" y1="0" x2="0" y2="1"><stop offset="0" stop-color="#f9b66b"/><stop offset="1" stop-color="#f08705"/></linearGradient></defs><rect x=".5" y=".5" width="15" height="15" rx="2.500" fill="url(#og)" stroke="#e07a00" stroke-width="1"/><path d="M8 6.500L4.300 10M8 6.500L11.700 10" stroke="#fff" stroke-width="1.300" fill="none"/><rect x="5.800" y="3" width="4.400" height="3.800" fill="#fff"/><rect x="2.300" y="9.300" width="4.300" height="3.700" fill="#fff"/><rect x="9.400" y="9.300" width="4.300" height="3.700" fill="#fff"/></svg>
<div class="pw">Powered by mxGraph - The JavaScript Diagramming Library</div>
<div class="btn" style="left:776px;top:12px;width:24px;height:14px;font-size:9px;line-height:12px;color:#d2402d;background:#f7f7f7;padding-left:2px"><span style="font-family:'Liberation Serif',serif;font-size:11px">g</span> +1</div>
<div class="cnt" style="left:806px;top:12px;width:19px;height:14px;font-size:9px;line-height:12px;border-color:#e8e8e8;color:#5a6a88">0</div>
<svg style="position:absolute;left:803px;top:15px" width="5" height="8" viewBox="0 0 5 8"><path d="M4.500 0L.5 4l4 4" fill="#fff" stroke="#ddd" stroke-width="1"/></svg>
<div style="position:absolute;left:849px;top:11px;width:16px;height:16px;background:linear-gradient(#d23a24,#b82c18);color:#fff;font:bold 13px/14px 'Liberation Serif',serif;white-space:nowrap;overflow:hidden">g<span style="font:bold 9px/10px 'Liberation Sans',sans-serif;vertical-align:top">+</span></div>
<div class="btn" style="left:1044px;top:10px;width:56px;height:19px;line-height:17px;padding-left:19px;font-size:11.500px">Tweet</div>
<svg style="position:absolute;left:1047px;top:13.500px" width="14" height="11" viewBox="0 0 14 11"><path fill="#1f9ad6" d="M14 1.300a5.700 5.700 0 0 1-1.650.45A2.900 2.900 0 0 0 13.600.15a5.700 5.700 0 0 1-1.800.7A2.870 2.870 0 0 0 6.900 3.470 8.150 8.150 0 0 1 1 .5a2.870 2.870 0 0 0 .9 3.830A2.860 2.860 0 0 1 .6 3.970v.04a2.870 2.870 0 0 0 2.300 2.800 2.900 2.900 0 0 1-1.300.05 2.870 2.870 0 0 0 2.680 2A5.760 5.760 0 0 1 0 10.050 8.130 8.130 0 0 0 4.400 11.340c5.280 0 8.170-4.380 8.170-8.170l-.01-.37A5.800 5.800 0 0 0 14 1.300z"/></svg>
<div class="cnt" style="left:1106px;top:10px;width:35px;height:19px;line-height:17px;font-size:11px">19.8K</div>
<svg style="position:absolute;left:1102px;top:14.500px" width="6" height="10" viewBox="0 0 6 10"><path d="M5.500 0L.8 5l4.700 5" fill="#fff" stroke="#c4c4c4" stroke-width="1"/></svg>
<div class="btn" style="left:1154px;top:10px;width:125px;height:19px;line-height:17px;padding-left:19px">Follow @Diagramly</div>
<svg style="position:absolute;left:1157px;top:13.500px" width="14" height="11" viewBox="0 0 14 11"><path fill="#1f9ad6" d="M14 1.300a5.700 5.700 0 0 1-1.650.45A2.900 2.900 0 0 0 13.600.15a5.700 5.700 0 0 1-1.800.7A2.870 2.870 0 0 0 6.900 3.470 8.150 8.150 0 0 1 1 .5a2.870 2.870 0 0 0 .9 3.830A2.860 2.860 0 0 1 .6 3.970v.04a2.870 2.870 0 0 0 2.300 2.800 2.900 2.900 0 0 1-1.300.05 2.870 2.870 0 0 0 2.680 2A5.760 5.760 0 0 1 0 10.050 8.130 8.130 0 0 0 4.400 11.340c5.280 0 8.170-4.380 8.170-8.170l-.01-.37A5.800 5.800 0 0 0 14 1.300z"/></svg>
</div>
</body></html>
